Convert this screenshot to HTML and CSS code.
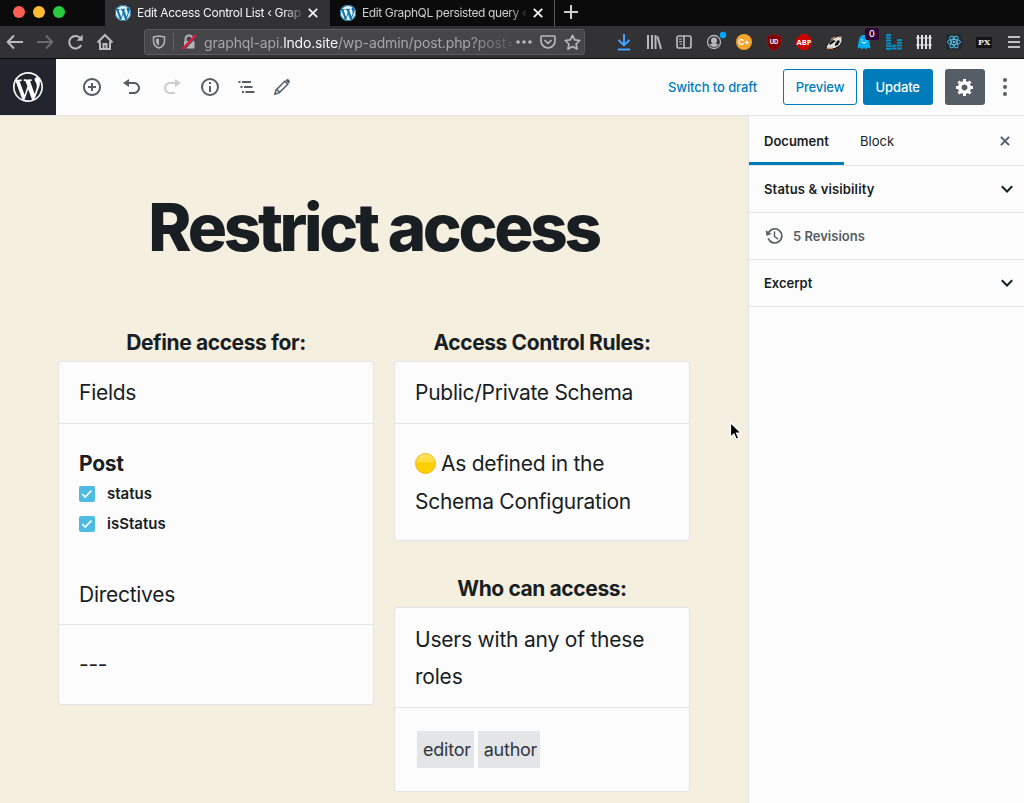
FILE: index.html
```html
<!DOCTYPE html>
<html lang="en">
<head>
<meta charset="utf-8">
<title>Edit Access Control List</title>
<link rel="stylesheet" href="styles.css">
</head>
<body>
<svg class="defs" width="0" height="0" aria-hidden="true">
  <symbol id="wp" viewBox="0 0 20 20"><path d="M20 10c0-5.51-4.49-10-10-10C4.48 0 0 4.49 0 10c0 5.52 4.48 10 10 10 5.51 0 10-4.48 10-10zM7.78 15.37L4.37 6.22c.55-.02 1.17-.08 1.17-.08.5-.06.44-1.13-.06-1.11 0 0-1.45.11-2.37.11-.18 0-.37 0-.58-.01C4.12 2.69 6.87 1.11 10 1.11c2.33 0 4.45.87 6.05 2.34-.68-.11-1.65.39-1.65 1.58 0 .74.45 1.36.9 2.1.35.61.55 1.36.55 2.46 0 1.49-1.4 5-1.4 5l-3.03-8.37c.54-.02.82-.17.82-.17.5-.05.44-1.25-.06-1.22 0 0-1.44.12-2.38.12-.87 0-2.33-.12-2.33-.12-.5-.03-.56 1.2-.06 1.22l.92.08 1.26 3.41zM17.41 10c.24-.64.74-1.87.43-4.25.7 1.29 1.05 2.71 1.05 4.25 0 3.29-1.73 6.24-4.4 7.78.97-2.59 1.94-5.2 2.92-7.78zM6.1 18.09C3.12 16.65 1.11 13.53 1.11 10c0-1.3.23-2.48.72-3.59C3.25 10.3 4.67 14.2 6.1 18.09zm4.03-6.63l2.58 6.98c-.86.29-1.76.45-2.71.45-.79 0-1.57-.11-2.29-.33.81-2.38 1.62-4.74 2.42-7.1z"/></symbol>
  <symbol id="chevron" viewBox="0 0 14 10"><path d="M1.800 2.300 7 7.500l5.200-5.200" fill="none" stroke="currentColor" stroke-width="2"/></symbol>
</svg>

<div class="tabs">
  <div class="lights"><i class="light red"></i><i class="light amber"></i><i class="light green"></i></div>
  <div class="tab active">
    <span class="favicon"><svg width="16" height="16"><use href="#wp"/></svg></span>
    <span class="tab-title">Edit Access Control List ‹ Graph</span>
    <svg class="tab-close" width="10" height="10" viewBox="0 0 10 10"><path d="m.8.8 8.400 8.400M9.200.8.8 9.200"/></svg>
  </div>
  <div class="tab second">
    <span class="favicon"><svg width="16" height="16"><use href="#wp"/></svg></span>
    <span class="tab-title">Edit GraphQL persisted query ‹</span>
    <svg class="tab-close" width="10" height="10" viewBox="0 0 10 10"><path d="m.8.8 8.400 8.400M9.200.8.8 9.200"/></svg>
  </div>
  <svg class="new-tab" width="14" height="14" viewBox="0 0 14 14"><path d="M7 0v14M0 7h14"/></svg>
</div>

<div class="navbar">
  <div class="nav-icons">
    <svg viewBox="0 0 18 18"><path d="M17 9H2M8 2.500 1.700 9 8 15.500"/></svg>
    <svg class="dim" viewBox="0 0 18 18"><path d="M1 9h15M10 2.500 16.300 9 10 15.500"/></svg>
    <svg viewBox="0 0 18 18"><path d="M15.200 12A6.300 6.300 0 1 1 14.500 5.300"/><path d="M16.700 1.500v6.200h-6.200z" class="solid"/></svg>
    <svg viewBox="0 0 18 18"><path d="M1.500 9.500 9 2l7.500 7.500M4 8.500V16h10V8.500"/><path d="M7.500 16v-5h3v5"/></svg>
  </div>
  <div class="address">
    <svg class="shield" width="14" height="14" viewBox="0 0 14 14"><path d="M7 1 12.500 2v4c0 3.500-2 5.700-5.500 7C3.500 11.700 1.500 9.500 1.500 6V2z" fill="none" stroke="#b3b3b5" stroke-width="1.500"/><path d="M7 3.500v7C5 9.500 4 8 4 6V4z" fill="#b3b3b5"/></svg>
    <i class="address-rule"></i>
    <svg class="lock" width="16" height="16" viewBox="0 0 16 16"><path d="M4.500 8V5a3.500 3.500 0 0 1 7 0v3" fill="none" stroke="#b3b3b5" stroke-width="2"/><rect x="3" y="7" width="10.500" height="7.500" rx="1" fill="#b3b3b5"/><path d="m2 15.500 13-14" stroke="#464648" stroke-width="3"/><path d="m1.500 15 13.500-14" stroke="#ef1940" stroke-width="2"/></svg>
    <span class="url">graphql-api.<b>lndo.site</b>/wp-admin/post.php?post=</span>
    <svg class="dots" width="16" height="4" viewBox="0 0 16 4"><circle cx="2" cy="2" r="1.800"/><circle cx="8" cy="2" r="1.800"/><circle cx="14" cy="2" r="1.800"/></svg>
    <svg class="pocket" width="16" height="14" viewBox="0 0 16 14"><path d="M2 1h12a1 1 0 0 1 1 1v4a7 7 0 0 1-14 0V2a1 1 0 0 1 1-1zM4.500 5 8 8.500 11.500 5"/></svg>
    <svg class="star" width="17" height="16" viewBox="0 0 17 16"><path d="m8.500 1.300 2.200 4.600 5.100.6-3.700 3.500 1 5-4.600-2.500L4 15l.9-5L1.200 6.500l5.100-.6z"/></svg>
  </div>
  <div class="extensions">
    <span class="ext"><svg width="14" height="18" viewBox="0 0 14 18" fill="none" stroke="#45a1ff" stroke-width="2"><path d="M7 1v11M1.500 7 7 12.300 12.500 7M1 16.500h12"/></svg></span>
    <span class="ext"><svg width="16" height="16" viewBox="0 0 16 16" fill="none" stroke="#b9b9bb" stroke-width="2"><path d="M2 1v14M6 1v14M9.500 1v14M11.500 2.500 15 15"/></svg></span>
    <span class="ext"><svg width="16" height="14" viewBox="0 0 16 14" fill="none" stroke="#b9b9bb" stroke-width="1.700"><rect x="1" y="1" width="14" height="12" rx="2"/><path d="M8 1v12"/><path d="M3 4h3M3 6.500h3M3.500 9H6" stroke-width="1.200"/></svg></span>
    <span class="ext"><svg width="20" height="22" viewBox="0 0 20 22"><circle cx="10" cy="11" r="6.500" fill="none" stroke="#b9b9bb" stroke-width="1.300"/><circle cx="10" cy="9.500" r="3" fill="#b9b9bb"/><path d="M5.500 13.500q4.500-3 9 0-4.500 5-9 0" fill="#b9b9bb"/><circle cx="19" cy="4" r="3.200" fill="#00a8ff"/></svg></span>
    <span class="ext"><b class="badge coin">C+</b></span>
    <span class="ext"><svg width="16" height="17" viewBox="0 0 16 17"><path d="M1 2q4 0 7-2 3 2 7 2v6q0 6-7 9-7-3-7-9z" fill="#800000" stroke="#a32122" stroke-width=".5"/><text x="8" y="10.200" text-anchor="middle" class="ud">UD</text></svg></span>
    <span class="ext"><svg width="16" height="16" viewBox="0 0 16 16"><path d="M5 0h6l5 5v6l-5 5H5l-5-5V5z" fill="#c70000"/><text x="8" y="10.800" text-anchor="middle" class="abp">ABP</text></svg></span>
    <span class="ext"><svg width="18" height="15" viewBox="0 0 18 15"><path d="M1 12 4 7l5-4 4-2 2 .5 2 1v4l-2 4-5 3H2z" fill="#ddd" stroke="#161616"/><path d="m4 8 4-3 3 1-3 2-3 2zM10 9l3-4 2 1-2 4-3 1z" fill="#151515"/><path d="m6 4.500 4-2.500M14 2l3 .5M2 13.300h6" stroke="#d99450" stroke-width="1.300"/></svg></span>
    <span class="ext ghost"><svg width="14" height="16" viewBox="0 0 14 16"><path d="M2 6a5 5 0 0 1 10 0l1.500 8.500-3-1L9 15.500 7 13.500 5 15.500l-1.500-2-3 1z" fill="#00aef0"/><path d="M5 5v1.500M9 5v1.500M4.500 8q2.500 2.500 5 0" stroke="#fff" fill="none"/></svg><b class="count">0</b></span>
    <span class="ext"><svg width="16" height="16" viewBox="0 0 16 16" stroke="#0a8cc1" stroke-width="5"><path d="M2.500 0v16" stroke-dasharray="2 .8"/><path d="M8 10.800V16M13.500 5v11" stroke-dasharray="2 .8"/></svg></span>
    <span class="ext"><svg width="16" height="16" viewBox="0 0 16 16" fill="none" stroke="#e1e1e2" stroke-width="2"><path d="M2 1v14M6 1v14M10 1v14M14 1v14"/><path d="M0 4h16M0 11h16" stroke-width="1.200"/></svg></span>
    <span class="ext"><svg width="16" height="16" viewBox="0 0 16 16"><path d="M0 0h16v16H0z" fill="#202b35"/><g fill="none" stroke="#55b9d9"><ellipse cx="8" cy="8" rx="6.500" ry="2.600"/><ellipse cx="8" cy="8" rx="6.500" ry="2.600" transform="rotate(60 8 8)"/><ellipse cx="8" cy="8" rx="6.500" ry="2.600" transform="rotate(120 8 8)"/></g><circle cx="8" cy="8" r="1.300" fill="#55b9d9"/></svg></span>
    <span class="ext"><b class="px">PX</b></span>
    <span class="ext"><svg width="12" height="12" viewBox="0 0 12 12" stroke="#c0c0c1" stroke-width="2"><path d="M0 1h12M0 6h12M0 11h12"/></svg></span>
  </div>
</div>

<header class="editor-header">
  <div class="wp-home"><svg width="30" height="30"><use href="#wp"/></svg></div>
  <div class="tools">
    <svg viewBox="0 0 20 20"><path d="M10 1c-5 0-9 4-9 9s4 9 9 9 9-4 9-9-4-9-9-9zm0 16c-3.900 0-7-3.100-7-7s3.100-7 7-7 7 3.100 7 7-3.100 7-7 7zm1-11H9v3H6v2h3v3h2v-3h3V9h-3V6z"/></svg>
    <svg viewBox="0 0 20 20"><path d="M12 5H7V2L1 6l6 4V7h5c2.200 0 4 1.800 4 4s-1.800 4-4 4H7v2h5c3.300 0 6-2.700 6-6s-2.700-6-6-6z"/></svg>
    <svg class="disabled" viewBox="0 0 20 20"><path d="M8 5h5V2l6 4-6 4V7H8c-2.200 0-4 1.800-4 4s1.800 4 4 4h5v2H8c-3.300 0-6-2.700-6-6s2.700-6 6-6z"/></svg>
    <svg class="info" viewBox="0 0 20 20"><circle cx="10" cy="10" r="8" fill="none" stroke="#555d66" stroke-width="2"/><path d="M9 5h2v2H9zM9 9h2v6H9z"/></svg>
    <svg class="outline" viewBox="0 0 20 20"><path d="M1.500 4h2v2h-2zM5 4h9v2H5zM3.500 9h2v2h-2zM7 9h8.500v2H7zM5 14h2v2H5zM8.500 14h9v2h-9z"/></svg>
    <svg class="pencil" viewBox="0 0 20 20"><path d="m2.800 17.200 1.300-4.300 8.700-8.700 3 3-8.700 8.700zM5 12.800l2.200 2.200" fill="none" stroke="#555d66" stroke-width="1.500"/><path d="m13.500 3.500 1.200-1.200q.8-.8 1.600 0l1.400 1.400q.8.800 0 1.600l-1.200 1.200z"/></svg>
  </div>
  <div class="actions">
    <span class="draft">Switch to draft</span>
    <span class="button preview">Preview</span>
    <span class="button update">Update</span>
    <span class="button cog"><svg width="20" height="20" viewBox="0 0 20 20"><path d="M18 12h-2.180c-.17.7-.44 1.350-.81 1.930l1.540 1.540-2.100 2.100-1.540-1.540c-.58.36-1.230.63-1.910.79V19H8v-2.180c-.68-.16-1.330-.43-1.910-.79l-1.540 1.540-2.120-2.120 1.540-1.540c-.36-.58-.63-1.230-.79-1.910H1V9.030h2.170c.16-.7.44-1.350.8-1.940L2.430 5.550l2.100-2.100 1.540 1.540c.58-.37 1.240-.64 1.930-.81V2h3v2.180c.68.16 1.330.43 1.910.79l1.540-1.540 2.120 2.120-1.540 1.540c.36.59.64 1.240.8 1.940H18V12zm-8.500 1.500c1.660 0 3-1.340 3-3s-1.340-3-3-3-3 1.340-3 3 1.340 3 3 3z"/></svg></span>
    <svg class="more" width="4" height="18" viewBox="0 0 4 18"><circle cx="2" cy="2" r="2"/><circle cx="2" cy="9" r="2"/><circle cx="2" cy="16" r="2"/></svg>
  </div>
</header>

<div class="workspace">
  <main class="canvas">
    <h1 class="title">Restrict access</h1>
    <div class="columns">
      <section class="column">
        <h2 class="label">Define access for:</h2>
        <div class="card">
          <div class="card-head">Fields</div>
          <div class="card-body fields">
            <div class="type">Post</div>
            <div class="check-row"><span class="checkbox"><svg width="12" height="10" viewBox="0 0 12 10"><path d="m1.300 5 2.900 3L10.500 1.500"/></svg></span>status</div>
            <div class="check-row"><span class="checkbox"><svg width="12" height="10" viewBox="0 0 12 10"><path d="m1.300 5 2.900 3L10.500 1.500"/></svg></span>isStatus</div>
          </div>
          <div class="card-head directives">Directives</div>
          <div class="card-body none">---</div>
        </div>
      </section>
      <section class="column">
        <h2 class="label">Access Control Rules:</h2>
        <div class="card">
          <div class="card-head">Public/Private Schema</div>
          <div class="card-body schema"><i class="yellow-dot"></i>As defined in the<br>Schema Configuration</div>
        </div>
        <h2 class="label who">Who can access:</h2>
        <div class="card">
          <div class="card-head users">Users with any of these<br>roles</div>
          <div class="card-body roles"><span class="role">editor</span><span class="role">author</span></div>
        </div>
      </section>
    </div>
    <svg class="cursor" width="14" height="21" viewBox="0 0 14 21"><path d="M1.500 1.500v14.800l3.400-3.200 2.300 5.200 2.600-1.100-2.300-5.100h4.600z" fill="#000" stroke="#fff" stroke-width="1.200"/></svg>
  </main>
  <aside class="sidebar">
    <div class="side-tabs">
      <span class="side-tab current">Document</span>
      <span class="side-tab">Block</span>
      <svg class="side-close" width="10" height="10" viewBox="0 0 10 10"><path d="m.9.9 8.200 8.200M9.100.9.900 9.100"/></svg>
    </div>
    <div class="panel status">Status &amp; visibility<svg class="arrow" width="14" height="10"><use href="#chevron"/></svg></div>
    <div class="panel revisions"><svg width="20" height="20" viewBox="0 0 20 20"><path d="M4.700 6.200A7.100 7.100 0 1 1 4.100 12.300" fill="none" stroke="#555d66" stroke-width="1.700"/><path d="M1.700 4.300 2.500 10l5-2.300z" fill="#555d66"/><path d="M10.500 5.500v5l3.500 2.600" fill="none" stroke="#555d66" stroke-width="1.400"/></svg>5 Revisions</div>
    <div class="panel">Excerpt<svg class="arrow" width="14" height="10"><use href="#chevron"/></svg></div>
  </aside>
</div>
</body>
</html>
```
FILE: styles.css
```css
* { box-sizing: border-box; }
body { margin: 0; width: 1024px; height: 803px; overflow: hidden; font-family: Inter, "Liberation Sans", sans-serif; font-size: 13px; color: #191e23; background: #fcfcfc; }
svg { display: block; flex: none; }
.defs { position: absolute; }

.tabs { height: 26px; display: flex; background: #0b0b0b; }
.lights { width: 105px; display: flex; gap: 8px; padding: 5.500px 0 0 13px; }
.light { width: 12px; height: 12px; border-radius: 50%; }
.red { background: #ff5f57; }
.amber { background: #fdbc30; }
.green { background: #28ca40; }
.tab { width: 225px; height: 26px; display: flex; align-items: center; padding: 0 12px 1px 10px; color: #cfcfd0; font-size: 12px; }
.active { background: #323234; color: #f5f5f6; }
.second { border-right: 1px solid #5b5b5c; padding-right: 11px; }
.favicon { width: 16px; height: 16px; margin-right: 6px; border-radius: 50%; background: #e8f1f7; }
.favicon svg { fill: #0f74a8; }
.tab-title { width: 164px; white-space: nowrap; letter-spacing: -.31px; mask-image: linear-gradient(90deg, #000 147px, transparent 168px); }
.second .tab-title { letter-spacing: -.38px; }
.tab-close { margin-left: auto; fill: none; stroke: #f2f2f3; stroke-width: 1.800; }
.new-tab { margin: 5px 0 0 9px; fill: none; stroke: #d0d0d1; stroke-width: 2; }

.navbar { height: 33px; display: flex; background: #323234; border-bottom: 1px solid #0c0c0d; }
.nav-icons { flex: none; width: 144px; display: flex; align-items: center; gap: 12px; padding-left: 6px; }
.nav-icons svg { width: 18px; height: 18px; fill: none; stroke: #bcbcbd; stroke-width: 2; }
.nav-icons .solid { fill: #bcbcbd; stroke: none; }
.nav-icons .dim { stroke: #6c6c6e; }
.address { flex: none; width: 441px; height: 26px; margin-top: 3px; display: flex; align-items: center; padding-left: 7px; background: #464648; border: 1px solid #5b5b5d; border-radius: 3px; }
.address-rule { width: 1px; height: 18px; margin: 0 7px 0 7px; background: #626264; }
.url { flex: none; width: 308px; margin-left: 7px; padding-top: 1px; white-space: nowrap; font-size: 14px; line-height: 20px; letter-spacing: -.14px; color: #a6a6a8; mask-image: linear-gradient(90deg, #000 265px, transparent 316px); }
.url b { color: #f6f6f7; font-weight: 400; }
.dots { margin-left: 4px; fill: #b9b9bb; }
.pocket { margin-left: 8px; }
.star { margin-left: 8px; }
.pocket, .star { fill: none; stroke: #b9b9bb; stroke-width: 1.700; stroke-linejoin: round; }
.extensions { flex: none; display: flex; margin-left: 24px; }
.ext { width: 30px; height: 32px; display: flex; align-items: center; justify-content: center; }
.ext svg { overflow: visible; }
.badge { width: 16px; height: 16px; border-radius: 50%; background: #f2a52b; color: #fff; font: bold 8px/16px Inter, sans-serif; text-align: center; }
.ud { fill: #fff; font: bold 6px Inter, sans-serif; }
.abp { fill: #fff; font: bold 7.500px "Open Sans", sans-serif; }
.ghost { position: relative; }
.count { position: absolute; left: 16px; top: 2px; width: 14px; height: 12px; border-radius: 2px; background: #300036; color: #fff; font: 500 9px/12px Inter, sans-serif; text-align: center; }
.px { width: 16px; height: 11px; background: #151516; color: #f4f4f4; font: bold 8px/11px "DejaVu Serif", serif; text-align: center; }

.editor-header { height: 57px; display: flex; border-bottom: 1px solid #e2e4e7; background: #fcfcfc; }
.wp-home { width: 56px; height: 56px; display: flex; align-items: center; justify-content: center; background: #22252d; }
.wp-home svg { fill: #fcfcfc; }
.tools { display: flex; align-items: center; gap: 20px; padding-left: 26px; }
.tools svg { width: 20px; height: 20px; fill: #555d66; }
.tools .disabled { fill: #cbcdd0; }
.tools .info { margin-left: -2px; }
.tools .outline { margin-left: -3px; }
.tools .pencil { margin-left: -5px; }
.actions { margin-left: auto; display: flex; align-items: center; padding-right: 17px; color: #007cba; font-weight: 500; }
.draft { margin-right: 26px; letter-spacing: -.09px; }
.button { height: 36px; display: flex; align-items: center; justify-content: center; border-radius: 3px; letter-spacing: -.12px; }
.preview { width: 74px; border: 1px solid #007cba; margin-right: 5.500px; }
.update { width: 70.500px; margin-right: 12px; background: #007cba; color: #fff; }
.cog { width: 40px; margin-right: 18px; background: #555d66; fill: #fff; }
.more { fill: #555d66; }

.workspace { display: flex; height: 687px; }
.canvas { position: relative; width: 748px; background: #f5efe0; font-size: 21px; line-height: 37.800px; letter-spacing: -.27px; }
.title { margin: 71px 0 0; padding-right: 1px; text-align: center; font-size: 65.500px; line-height: 82px; font-weight: 800; letter-spacing: -3.320px; }
.columns { display: grid; grid-template-columns: 316px 296px; gap: 20px; padding: 54px 0 0 58px; }
.label { margin: 0; height: 38px; padding-top: 1px; font-size: 21px; line-height: 37px; font-weight: 700; text-align: center; letter-spacing: -.4px; }
.who { margin-top: 28px; }
.card { border: 1px solid #e2e4e7; border-radius: 3px; background: #fcfcfc; }
.card-head { padding: 12px 20px 11px; border-bottom: 1px solid #e2e4e7; }
.card-body { padding: 21px 20px 20px; }
.fields { height: 151px; padding-bottom: 0; }
.type { font-weight: 700; }
.check-row { height: 30px; display: flex; align-items: center; padding-bottom: 7px; font-size: 15px; line-height: 22px; font-weight: 600; letter-spacing: 0; }
.checkbox { width: 16px; height: 16px; margin-right: 12px; border-radius: 2px; background: #4dbbe2; display: flex; align-items: center; justify-content: center; }
.checkbox svg { fill: none; stroke: #fff; stroke-width: 1.700; }
.directives { height: 50px; padding-top: 1px; padding-bottom: 0; }
.none { height: 79px; }
.users { height: 100px; padding-top: 12.500px; padding-bottom: 0; line-height: 37.500px; letter-spacing: -.21px; }
.yellow-dot { display: inline-block; width: 21px; height: 21px; margin-right: 5px; vertical-align: -3px; border-radius: 50%; border: 1px solid #f0b51c; background: linear-gradient(#ffe568 0, #ffdc38 40%, #ffd000 48%, #ffd100 100%); }
.roles { display: flex; gap: 4px; padding: 23px 22px; height: 83px; }
.role { height: 37px; padding: 0 3px 0 6px; background: #e3e5e7; color: #32373c; font-size: 18px; line-height: 37px; letter-spacing: -.24px; }
.cursor { position: absolute; left: 729px; top: 305px; }

.sidebar { width: 276px; border-left: 1px solid #e2e4e7; background: #fcfcfc; }
.side-tabs { height: 50px; display: flex; align-items: center; border-bottom: 1px solid #e2e4e7; padding-right: 14px; }
.side-tab { height: 49px; padding: 0 16px 0 15px; display: flex; align-items: center; }
.current { width: 95px; margin-right: 1px; padding-right: 0; border-bottom: 3px solid #007cba; padding-top: 3px; font-weight: 600; }
.side-close { margin-left: auto; fill: none; stroke: #555d66; stroke-width: 2; }
.panel { height: 47px; display: flex; align-items: center; padding: 0 10px 0 15px; border-bottom: 1px solid #e2e4e7; font-weight: 600; }
.status { letter-spacing: .14px; }
.arrow { margin-left: auto; }
.revisions { color: #555d66; }
.revisions svg { margin-right: 9px; }
```
